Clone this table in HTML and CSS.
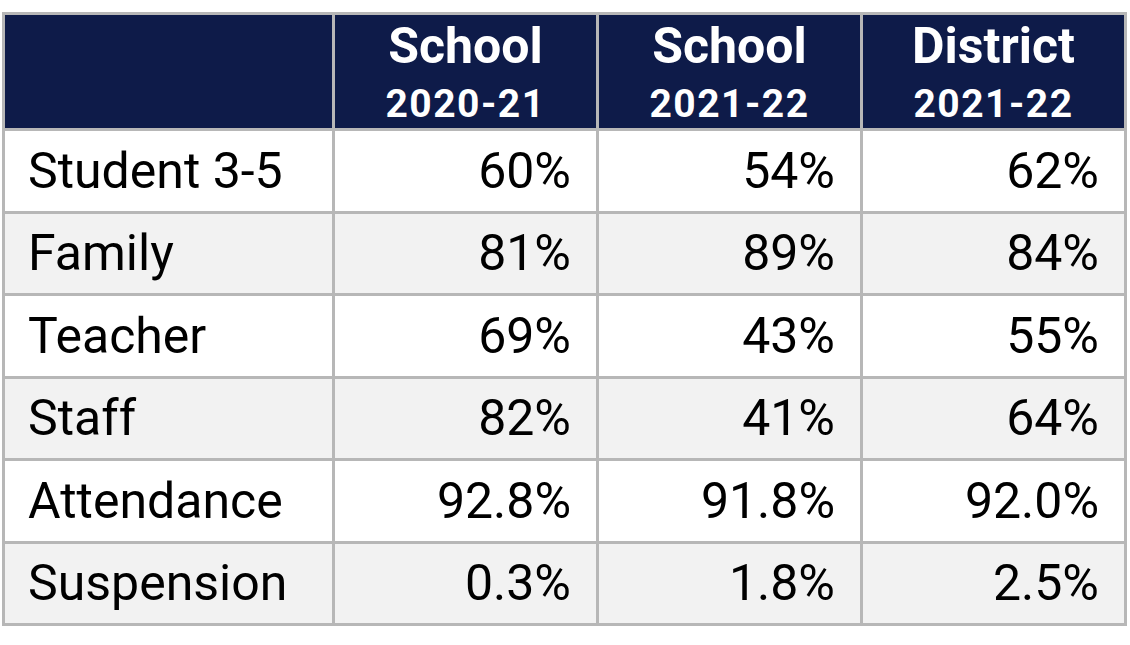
FILE: index.html
```html
<!DOCTYPE html>
<html>
<head>
<meta charset="utf-8">
<link rel="stylesheet" href="styles.css">
</head>
<body>
<table class="stats">
  <colgroup>
    <col class="col-label">
    <col class="col-val">
    <col class="col-val">
    <col class="col-val">
  </colgroup>
  <thead>
    <tr class="head-row">
      <th></th>
      <th><div class="h-main">School</div><div class="h-year">2020-21</div></th>
      <th><div class="h-main">School</div><div class="h-year">2021-22</div></th>
      <th><div class="h-main">District</div><div class="h-year">2021-22</div></th>
    </tr>
  </thead>
  <tbody>
    <tr><td class="label">Student 3-5</td><td class="num">60%</td><td class="num">54%</td><td class="num">62%</td></tr>
    <tr class="alt"><td class="label">Family</td><td class="num">81%</td><td class="num">89%</td><td class="num">84%</td></tr>
    <tr><td class="label">Teacher</td><td class="num">69%</td><td class="num">43%</td><td class="num">55%</td></tr>
    <tr class="alt"><td class="label">Staff</td><td class="num">82%</td><td class="num">41%</td><td class="num">64%</td></tr>
    <tr><td class="label">Attendance</td><td class="num">92.8%</td><td class="num">91.8%</td><td class="num">92.0%</td></tr>
    <tr class="alt"><td class="label">Suspension</td><td class="num">0.3%</td><td class="num">1.8%</td><td class="num">2.5%</td></tr>
  </tbody>
</table>
</body>
</html>
```

FILE: styles.css
```css
html, body {
  margin: 0;
  padding: 0;
  background: #ffffff;
}

body {
  font-family: Roboto, "Liberation Sans", sans-serif;
  color: #000000;
}

.stats {
  margin: 12px 0 0 2px;
  table-layout: fixed;
  width: 1125px;
  border-collapse: separate;
  border-spacing: 3px;
  background: #b7b7b7;
}

.col-label { width: 327px; }
.col-val { width: 261px; }

.head-row th {
  height: 113px;
  padding: 5px 0 0 0;
  box-sizing: border-box;
  background: #0e1b49;
  color: #ffffff;
  text-align: center;
  vertical-align: top;
  font-weight: 700;
}

.h-main {
  font-size: 50px;
  line-height: 52px;
}

.h-year {
  margin-top: 10px;
  font-size: 39px;
  line-height: 44px;
  letter-spacing: 1.5px;
}

tbody td {
  height: 79.5px;
  padding: 0;
  background: #ffffff;
  font-size: 50px;
  font-weight: 400;
  vertical-align: middle;
}

tbody tr.alt td {
  background: #f2f2f2;
}

td.label {
  text-align: left;
  padding-left: 23px;
}

td.num {
  text-align: right;
  padding-right: 25px;
}
```
